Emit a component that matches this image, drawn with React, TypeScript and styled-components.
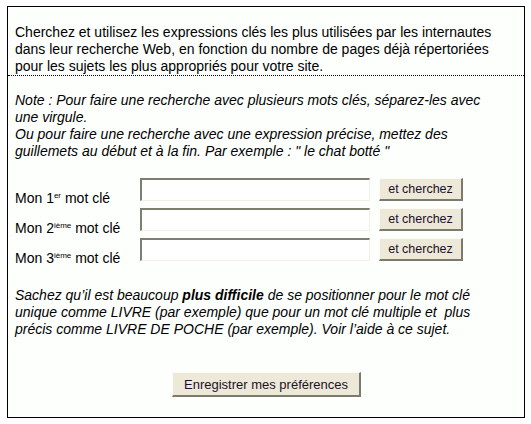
import React, { FC } from 'react';
import styled, { createGlobalStyle } from 'styled-components';

const GlobalStyle = createGlobalStyle`
  body {
    margin: 0;
    background: #ffffff;
    font-family: "Liberation Sans", Arial, sans-serif;
    font-size: 14px;
    color: #000000;
  }
`;

const Page = styled.div`
  padding: 6px 0 0 7px;
`;

const Panel = styled.div`
  box-sizing: border-box;
  width: 518px;
  height: 412px;
  border: 1px solid #000000;
  background: #fdfffd;
  padding-top: 17px;
  display: flex;
  flex-direction: column;
`;

const Text = styled.p<{ $italic?: boolean; $gap: number }>`
  margin: ${(p) => p.$gap}px 0 0;
  padding: 0 0 0 7px;
  line-height: 17px;
  white-space: nowrap;
  font-style: ${(p) => (p.$italic ? 'italic' : 'normal')};
`;

const Intro = styled(Text)`
  border-bottom: 1px dotted #000000;
`;

const Rows = styled.div`
  margin-top: 18px;
  padding-left: 7px;
  display: flex;
  flex-direction: column;
`;

const Row = styled.div`
  display: grid;
  grid-template-columns: 125px 239px 84px;
  height: 30px;
`;

const Label = styled.label`
  padding-top: 12px;
  line-height: 17px;
  white-space: nowrap;
`;

const Sup = styled.sup`
  font-size: 8px;
  line-height: 0;
  vertical-align: 5px;
`;

const Field = styled.input`
  box-sizing: border-box;
  width: 230px;
  height: 23px;
  margin: 0;
  border-style: solid;
  border-width: 2px 1px 1px 2px;
  border-color: #7f7d70 #f3efe4 #f3efe4 #7f7d70;
  background: #ffffff;
  font: 13px "Liberation Sans", Arial, sans-serif;
`;

const Button = styled.button<{ $wide?: boolean }>`
  box-sizing: border-box;
  width: ${(p) => (p.$wide ? '189px' : '84px')};
  height: ${(p) => (p.$wide ? '25px' : '23px')};
  margin: 0;
  padding: 0;
  border-style: solid;
  border-width: 1px 2px 2px 1px;
  border-color: #fbfaf4 #7c7a6c #7c7a6c #fbfaf4;
  background: #ece9d8;
  color: #1e0f2c;
  font: ${(p) => (p.$wide ? '13px' : '12.5px')} "Liberation Sans", Arial, sans-serif;
  cursor: pointer;
`;

const Footer = styled.div`
  margin-top: 34px;
  padding-left: 164px;
`;

const keywords = [
  { num: '1', suffix: 'er' },
  { num: '2', suffix: 'ième' },
  { num: '3', suffix: 'ième' },
];

const App: FC = () => (
  <Page>
    <GlobalStyle />
    <Panel>
      <Intro $gap={0}>
        Cherchez et utilisez les expressions clés les plus utilisées par les internautes
        <br />
        dans leur recherche Web, en fonction du nombre de pages déjà répertoriées
        <br />
        pour les sujets les plus appropriés pour votre site.
      </Intro>
      <Text $italic $gap={16}>
        Note : Pour faire une recherche avec plusieurs mots clés, séparez-les avec
        <br />
        une virgule.
        <br />
        Ou pour faire une recherche avec une expression précise, mettez des
        <br />
        guillemets au début et à la fin. Par exemple : " le chat botté "
      </Text>
      <Rows>
        {keywords.map((k) => (
          <Row key={k.num}>
            <Label>
              Mon {k.num}
              <Sup>{k.suffix}</Sup> mot clé
            </Label>
            <Field type="text" />
            <Button type="button">et cherchez</Button>
          </Row>
        ))}
      </Rows>
      <Text $italic $gap={19}>
        Sachez qu’il est beaucoup <b>plus difficile</b> de se positionner pour le mot clé
        <br />
        unique comme LIVRE (par exemple) que pour un mot clé multiple et&nbsp; plus
        <br />
        précis comme LIVRE DE POCHE (par exemple). Voir l’aide à ce sujet.
      </Text>
      <Footer>
        <Button type="button" $wide>
          Enregistrer mes préférences
        </Button>
      </Footer>
    </Panel>
  </Page>
);

export default App;
